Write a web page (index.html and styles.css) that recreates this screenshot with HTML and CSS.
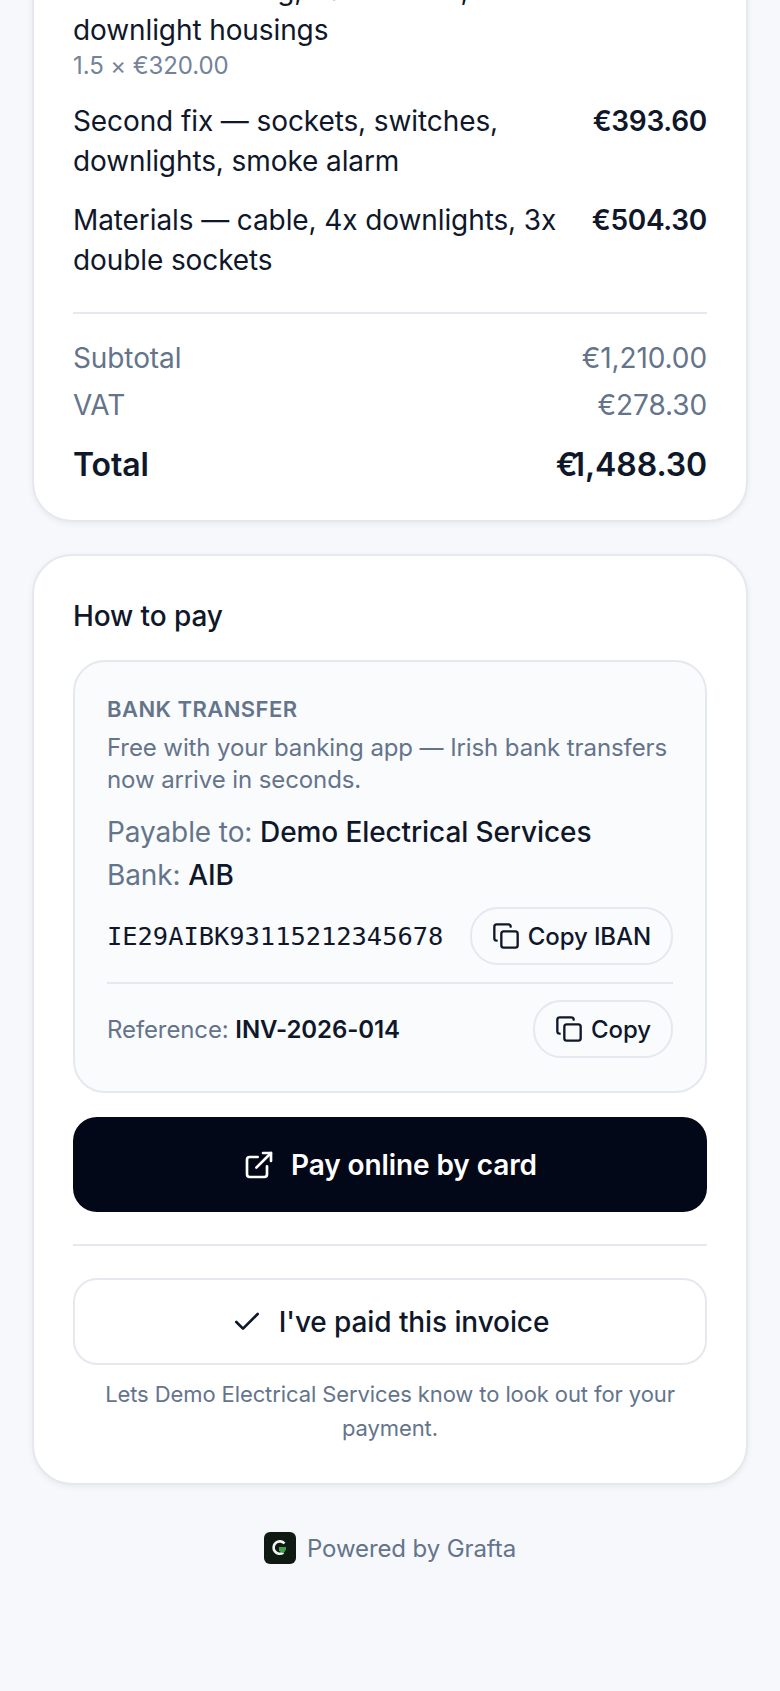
FILE: index.html
```html
<!DOCTYPE html>
<html lang="en">
<head>
<meta charset="utf-8">
<title>Invoice</title>
<link rel="stylesheet" href="styles.css">
</head>
<body>
<main class="page">
  <section class="card card-invoice">
    <div class="line">
      <div class="line-main">
        <div>First fix — wiring, back boxes, downlight housings</div>
        <div class="line-sub">1.5 × €320.00</div>
      </div>
      <div class="line-amt">€480.00</div>
    </div>
    <div class="line">
      <div class="line-main">Second fix — sockets, switches, downlights, smoke alarm</div>
      <div class="line-amt">€393.60</div>
    </div>
    <div class="line">
      <div class="line-main">Materials — cable, 4x downlights, 3x double sockets</div>
      <div class="line-amt">€504.30</div>
    </div>
    <div class="totals">
      <div class="tot"><span>Subtotal</span><span>€1,210.00</span></div>
      <div class="tot"><span>VAT</span><span>€278.30</span></div>
      <div class="tot tot-grand"><span>Total</span><span><span class="euro">€</span>1,488.30</span></div>
    </div>
  </section>

  <section class="card card-pay">
    <h2 class="pay-title">How to pay</h2>
    <div class="bank">
      <div class="bank-label">BANK TRANSFER</div>
      <p class="bank-note">Free with your banking app — Irish bank transfers now arrive in seconds.</p>
      <div class="bank-field">Payable to: <span class="strong">Demo Electrical Services</span></div>
      <div class="bank-field bank-field-2">Bank: <span class="strong">AIB</span></div>
      <div class="copy-row">
        <span class="iban">IE29AIBK93115212345678</span>
        <button class="copy-btn">
          <svg class="ico-copy" viewBox="0 0 24 24" fill="none" stroke="currentColor" stroke-width="2" stroke-linecap="round" stroke-linejoin="round"><rect x="8" y="8" width="14" height="14" rx="2"/><path d="M4 16c-1.1 0-2-.9-2-2V4c0-1.1.9-2 2-2h10c1.1 0 2 .9 2 2"/></svg>
          Copy IBAN
        </button>
      </div>
      <div class="copy-row ref-row">
        <span class="ref">Reference: <b>INV-2026-014</b></span>
        <button class="copy-btn">
          <svg class="ico-copy" viewBox="0 0 24 24" fill="none" stroke="currentColor" stroke-width="2" stroke-linecap="round" stroke-linejoin="round"><rect x="8" y="8" width="14" height="14" rx="2"/><path d="M4 16c-1.1 0-2-.9-2-2V4c0-1.1.9-2 2-2h10c1.1 0 2 .9 2 2"/></svg>
          Copy
        </button>
      </div>
    </div>
    <button class="btn btn-dark">
      <svg class="ico-btn" viewBox="0 0 24 24" fill="none" stroke="currentColor" stroke-width="2" stroke-linecap="round" stroke-linejoin="round"><path d="M15 3h6v6"/><path d="M10 14 21 3"/><path d="M18 13v6a2 2 0 0 1-2 2H5a2 2 0 0 1-2-2V8a2 2 0 0 1 2-2h6"/></svg>
      Pay online by card
    </button>
    <hr class="rule">
    <button class="btn btn-light">
      <svg class="ico-btn" viewBox="0 0 24 24" fill="none" stroke="currentColor" stroke-width="2" stroke-linecap="round" stroke-linejoin="round"><path d="M20 6 9 17l-5-5"/></svg>
      I've paid this invoice
    </button>
    <p class="helper">Lets Demo Electrical Services know to look out for your payment.</p>
  </section>

  <footer class="foot">
    <svg class="logo" viewBox="0 0 32 32"><rect width="32" height="32" rx="6" fill="#0f1a12"/><path d="M20.5 11.5a6.2 6.2 0 1 0-1 9" fill="none" stroke="#f1f5f1" stroke-width="2.6"/><path d="M15 15h7v2.5l-2.5 4-4.500-2.500z" fill="#3f9e4a"/></svg>
    <span>Powered by Grafta</span>
  </footer>
</main>
</body>
</html>
```

FILE: styles.css
```css
* { box-sizing: border-box; }
html, body { margin: 0; padding: 0; }
body {
  background: #f6f8fb;
  color: #0f172a;
  font-family: Inter, "Liberation Sans", sans-serif;
  letter-spacing: -0.1px;
  height: 1691px;
  overflow: hidden;
}
.page {
  padding: 0 32px;
  display: flex;
  flex-direction: column;
  gap: 32px;
}
.card {
  background: #fff;
  border: 2px solid #e5e8ee;
  border-radius: 40px;
  padding: 38px 39px;
  box-shadow: 0 2px 6px rgba(15, 23, 42, 0.06);
}
.card-invoice {
  margin-top: -92px;
  padding-top: 60px;
  padding-bottom: 35px;
}
.line {
  display: flex;
  justify-content: space-between;
  gap: 24px;
  font-size: 28px;
  line-height: 40px;
  margin-bottom: 19px;
}
.line:nth-child(3) { margin-bottom: 0; }
.line-main { flex: 1; }
.line-sub {
  color: #73839a;
  font-size: 24px;
  line-height: 32px;
}
.line-amt { font-weight: 600; letter-spacing: -0.3px; white-space: nowrap; }
.totals {
  margin-top: 32px;
  border-top: 2px solid #e5e8ee;
  padding-top: 24px;
}
.tot {
  display: flex;
  justify-content: space-between;
  color: #64748b;
  font-size: 28px;
  line-height: 40px;
  margin-bottom: 7px;
}
.tot-grand {
  color: #0f172a;
  font-size: 32px;
  font-weight: 600;
  margin: 20px 0 0;
}
.euro { letter-spacing: -4px; margin-right: -2px; }
.card-pay { padding-bottom: 38px; }
.pay-title {
  margin: 2px 0 24px;
  font-size: 28px;
  line-height: 40px;
  font-weight: 450;
}
.bank {
  background: #fafbfd;
  border: 2px solid #e5e8ee;
  border-radius: 32px;
  padding: 31px 32px 33px;
}
.bank-label {
  color: #64748b;
  font-size: 22px;
  line-height: 32px;
  font-weight: 600;
  letter-spacing: 0.45px;
}
.bank-note {
  margin: 7px 0 16px;
  color: #64748b;
  font-size: 24px;
  line-height: 32px;
}
.bank-field {
  color: #64748b;
  font-size: 28px;
  line-height: 40px;
}
.bank-field-2 { margin-top: 3px; }
.strong { color: #0f172a; font-weight: 450; }
.copy-row {
  display: flex;
  align-items: center;
  justify-content: space-between;
  margin-top: 12px;
}
.ref-row {
  border-top: 2px solid #e5e8ee;
  margin-top: 17px;
  padding-top: 16px;
}
.iban {
  font-family: "DejaVu Sans Mono", monospace;
  font-size: 25.4px;
  letter-spacing: 0;
  color: #0f172a;
}
.ref { font-size: 24px; color: #64748b; }
.ref b { color: #0f172a; font-weight: 600; }
.copy-btn {
  display: flex;
  align-items: center;
  gap: 8px;
  height: 58px;
  padding: 0 20px;
  background: transparent;
  border: 2px solid #e5e8ee;
  border-radius: 28px;
  font: 450 24px Inter, "Liberation Sans", sans-serif;
  letter-spacing: -0.1px;
  color: #0f172a;
}
.ico-copy { width: 28px; height: 28px; }
.btn {
  display: flex;
  align-items: center;
  justify-content: center;
  gap: 16px;
  width: 100%;
  font-family: Inter, "Liberation Sans", sans-serif;
  font-size: 28px;
  font-weight: 600;
  letter-spacing: -0.1px;
}
.ico-btn { width: 32px; height: 32px; }
.btn-dark {
  margin-top: 24px;
  height: 95px;
  border: 0;
  border-radius: 24px;
  background: #020817;
  color: #fff;
}
.rule {
  margin: 32px 0;
  border: 0;
  border-top: 2px solid #e5e8ee;
}
.btn-light {
  height: 87px;
  background: #fff;
  border: 2px solid #e5e8ee;
  border-radius: 24px;
  color: #0f172a;
  font-weight: 500;
}
.helper {
  margin: 12px 0 0;
  text-align: center;
  color: #64748b;
  font-size: 22px;
  line-height: 34px;
}
.foot {
  display: flex;
  align-items: center;
  justify-content: center;
  gap: 11px;
  margin-top: 15px;
  color: #64748b;
  font-size: 24px;
}
.logo { width: 32px; height: 32px; }
```
